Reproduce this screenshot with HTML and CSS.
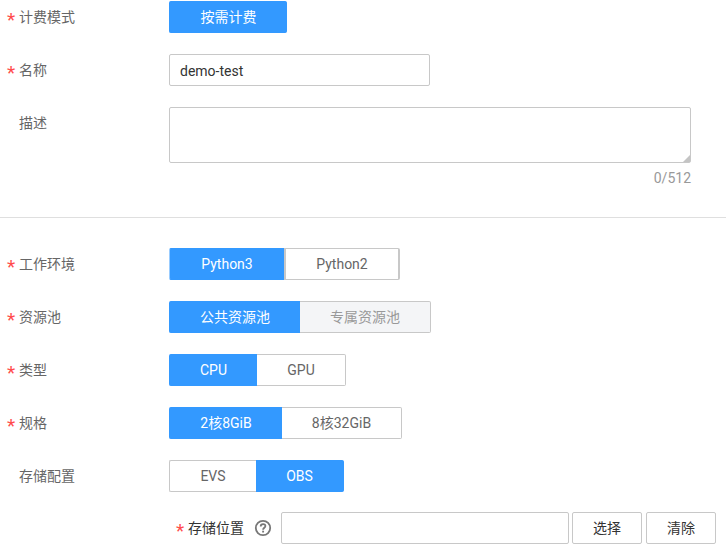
FILE: index.html
```html
<!DOCTYPE html>
<html lang="zh-CN">
<head>
<meta charset="utf-8">
<title>demo-test</title>
<link rel="stylesheet" href="styles.css">
</head>
<body>
<form class="form">
  <section class="group basic">
    <div class="row"><div class="label"><span class="star">*</span>计费模式</div><div class="segments"><button type="button" class="seg on w118">按需计费</button></div></div>
    <div class="row"><div class="label"><span class="star">*</span>名称</div><div class="field name">demo-test</div></div>
    <div class="row tall"><div class="label">描述</div><div class="description"><div class="field area"><svg class="grip" width="7" height="7" viewBox="0 0 7 7"><path d="M7 0V7H0Z" fill="#c4c4c4"/></svg></div><div class="count">0/512</div></div></div>
  </section>
  <section class="group config">
    <div class="row"><div class="label"><span class="star">*</span>工作环境</div><div class="segments"><button type="button" class="seg on w115 edge">Python3</button><button type="button" class="seg w116 thick">Python2</button></div></div>
    <div class="row"><div class="label"><span class="star">*</span>资源池</div><div class="segments"><button type="button" class="seg on w131">公共资源池</button><button type="button" class="seg off w131">专属资源池</button></div></div>
    <div class="row"><div class="label"><span class="star">*</span>类型</div><div class="segments"><button type="button" class="seg on w88">CPU</button><button type="button" class="seg w89">GPU</button></div></div>
    <div class="row"><div class="label"><span class="star">*</span>规格</div><div class="segments"><button type="button" class="seg on w113">2核8GiB</button><button type="button" class="seg w120">8核32GiB</button></div></div>
    <div class="row last"><div class="label">存储配置</div><div class="segments"><button type="button" class="seg first w87">EVS</button><button type="button" class="seg on w88">OBS</button></div></div>
    <div class="storage">
      <div class="label dark"><span class="star">*</span>存储位置</div>
      <svg class="help" width="18" height="18" viewBox="0 0 18 18" fill="none" stroke="#777"><circle cx="9" cy="9" r="7.2" stroke-width="1.8"/><path d="M6.7 7.4C6.7 4.3 11.4 4.3 11.4 7.1C11.4 8.8 9.1 8.8 9.1 10.7" stroke-width="1.8"/><path d="M9.1 11.7V13.5" stroke-width="1.9"/></svg>
      <div class="field path"></div>
      <button type="button" class="action">选择</button>
      <button type="button" class="action clear">清除</button>
    </div>
  </section>
</form>
</body>
</html>
```
FILE: styles.css
```css
* { box-sizing: border-box; }
body {
  margin: 0;
  background: #fff;
  color: #666;
  font: 14px/20px Roboto, "Noto Sans CJK SC", sans-serif;
}
.form { width: 726px; height: 554px; overflow: hidden; }
.group { display: flex; flex-direction: column; }
.basic { height: 218px; padding-top: 1px; border-bottom: 1px solid #dfdfdf; }
.config { padding-top: 30px; }
.row { display: flex; height: 32px; margin-bottom: 21px; }
.tall { height: 82px; margin-bottom: 0; }
.last { margin-bottom: 20px; }
.label {
  position: relative;
  width: 169px;
  height: 32px;
  padding-left: 19px;
  line-height: 30px;
  font-family: "Noto Sans CJK SC", sans-serif;
  white-space: nowrap;
}
.star {
  position: absolute;
  left: 7px;
  top: 4px;
  color: #ff4c4c;
  font: 19px/30px Roboto, sans-serif;
}
.field { border: 1px solid #c8c8c8; border-radius: 2px; }
.name { width: 261px; height: 32px; padding: 1px 10px 0; line-height: 30px; color: #333; }
.description { width: 522px; }
.area { position: relative; height: 56px; }
.grip { position: absolute; right: 0; bottom: 0; }
.count { text-align: right; color: #999; line-height: 20px; margin-top: 5px; }
.segments { display: flex; }
button { padding: 0; margin: 0; color: inherit; font: inherit; }
.seg {
  height: 32px;
  background: #fff;
  border: 1px solid #c8c8c8;
  border-left: 0;
  border-radius: 0 2px 2px 0;
  line-height: 30px;
}
.first { border-left: 1px solid #c8c8c8; border-right: 0; border-radius: 2px 0 0 2px; }
.on { background: #39f; border-color: #39f; color: #fff; }
.on:first-child { padding-left: 2px; border-radius: 2px 0 0 2px; }
.on:only-child { border-radius: 2px; }
.on.edge { padding-left: 1px; border-left: 1px solid #9cf; }
.off { background: #f4f5f7; color: #999; }
.thick { border-left: 2px solid #c8c8c8; border-right-width: 2px; }
.w87 { width: 87px; } .w88 { width: 88px; } .w89 { width: 89px; }
.w113 { width: 113px; } .w115 { width: 115px; } .w116 { width: 116px; }
.w118 { width: 118px; } .w120 { width: 120px; } .w131 { width: 131px; }
.storage { display: flex; padding-left: 169px; }
.dark { width: 85px; color: #333; }
.help { margin: 7px 9px 0 0; }
.path { width: 288px; height: 32px; margin-right: 3px; }
.action { width: 70px; height: 32px; background: #fff; color: #333; border: 1px solid #c8c8c8; border-radius: 2px; }
.clear { margin-left: 4px; }
```
